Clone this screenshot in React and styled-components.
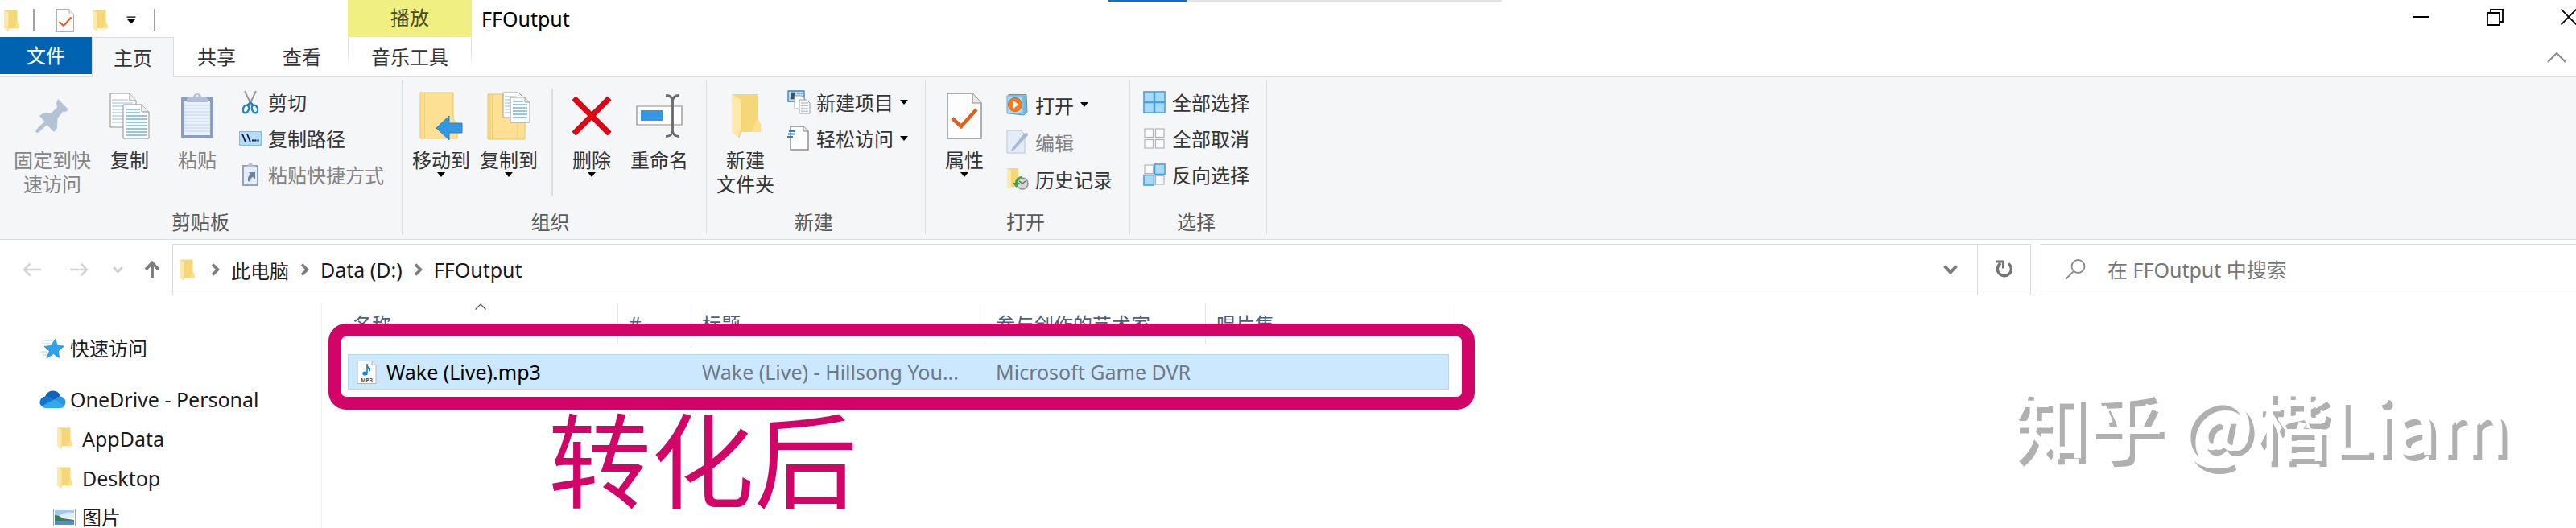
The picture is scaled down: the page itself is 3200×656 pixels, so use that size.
import React from 'react';
import styled, { createGlobalStyle, css } from 'styled-components';

const GlobalStyle = createGlobalStyle`
  * {
    box-sizing: border-box;
  }
  body {
    margin: 0;
    background: #fff;
    color: #1a1a1a;
    font-family: "Noto Sans", "Noto Sans CJK SC", sans-serif;
    font-size: 24px;
  }
  button {
    background: none;
    border: none;
    padding: 0;
    color: inherit;
    font: inherit;
  }
  a {
    color: inherit;
    text-decoration: none;
  }
  svg {
    display: block;
    flex: none;
  }
`;

const Window = styled.div`
  position: relative;
  display: flex;
  flex-direction: column;
  height: 100vh;
  overflow: hidden;
`;

/* ---------- title bar ---------- */

const TitleBar = styled.header`
  display: flex;
  height: 46px;
`;

const QuickAccess = styled.div`
  flex: 0 0 432px;
  display: flex;
  align-items: center;
  padding: 4px 0 0 4px;
`;

const QuickButton = styled.button`
  display: flex;
  justify-content: center;
  width: ${({ $width }) => $width}px;
`;

const QuickDivider = styled.span`
  width: 2px;
  height: 28px;
  margin-left: ${({ $left = 0 }) => $left}px;
  background: #a0a0a0;
`;

const ContextLabel = styled.div`
  flex: 0 0 154px;
  background: #f0ef82;
  color: #4a4a1c;
  line-height: 44px;
  text-align: center;
`;

const WindowTitle = styled.h1`
  flex: 1;
  margin: 0;
  padding-left: 12px;
  color: #000;
  font-size: 25px;
  font-weight: 400;
  line-height: 46px;
`;

const WindowButtons = styled.div`
  flex: none;
  display: flex;
  width: 239px;
`;

const WindowButton = styled.button`
  flex: 0 0 92px;
  display: flex;
  justify-content: center;
  align-items: center;
  height: 42px;
`;

const TopProgress = styled.div`
  position: absolute;
  top: 0;
  left: 1377px;
  width: 489px;
  height: 2px;
  background: linear-gradient(90deg, #0f6fc5 97px, #e3e3e3 97px);
`;

/* ---------- tabs ---------- */

const TabBar = styled.nav`
  display: flex;
  align-items: flex-start;
  height: 49px;
`;

const Tab = styled.button`
  width: 106px;
  height: 50px;
  color: #333;
  line-height: 48px;
  text-align: center;
  ${({ $kind }) => $kind === 'file' && css`
    width: 114px;
    height: 46px;
    background: #0063b1;
    color: #fff;
    line-height: 44px;
  `}
  ${({ $kind }) => $kind === 'active' && css`
    position: relative;
    width: 102px;
    background: #f4f6f8;
    border: 1px solid #dcdddf;
    border-bottom: none;
  `}
  ${({ $kind }) => $kind === 'context' && css`
    width: 154px;
    height: 49px;
    margin-left: 4px;
    border: 1px solid;
    border-width: 0 1px;
    border-image: linear-gradient(#dcdddf 30%, #fff 80%) 1;
  `}
`;

const CollapseButton = styled.button`
  margin: 18px 12px 0 auto;
`;

/* ---------- ribbon ---------- */

const Ribbon = styled.div`
  display: flex;
  padding: 4px 0 6px;
  background: #f4f6f8;
  border: solid #dadcde;
  border-width: 1px 0;
`;

const Group = styled.section`
  display: flex;
  flex-direction: column;
  height: 191px;
  padding: 0 ${({ $right = 11 }) => $right}px 0 ${({ $left = 6 }) => $left}px;
  border-right: 1px solid #dcdee0;
`;

const GroupBody = styled.div`
  flex: 1;
  display: flex;
  align-items: flex-start;
`;

const GroupName = styled.h2`
  margin: 0;
  color: #5a5a5a;
  font-size: 24px;
  font-weight: 400;
  line-height: 30px;
  text-align: center;
`;

const GroupDivider = styled.span`
  width: 2px;
  height: 134px;
  margin: 10px 6px 0 11px;
  background: #dcdee0;
`;

const BigButton = styled.button`
  display: flex;
  flex-direction: column;
  align-items: center;
  min-width: 84px;
  padding: 14px 6px 0;
  color: ${({ disabled }) => (disabled ? '#848484' : '#333')};
  line-height: 30px;
`;

const BigIcon = styled.span`
  display: flex;
  align-items: center;
  height: 60px;
  margin-bottom: 10px;
`;

const SmallList = styled.div`
  display: flex;
  flex-direction: column;
  padding-top: ${({ $top = 4 }) => $top}px;
`;

const SmallButton = styled.button`
  display: flex;
  align-items: center;
  gap: 8px;
  height: ${({ $height = 45 }) => $height}px;
  padding: 0 10px;
  color: ${({ disabled }) => (disabled ? '#848484' : '#333')};
`;

const SmallIcon = styled.span`
  display: flex;
  justify-content: center;
  width: 28px;
`;

/* ---------- address bar ---------- */

const AddressRow = styled.div`
  display: flex;
  padding-top: 5px;
`;

const NavButtons = styled.div`
  flex: 0 0 214px;
  display: flex;
  align-items: center;
  padding-left: 28px;
`;

const NavButton = styled.button`
  margin-right: ${({ $gap = 0 }) => $gap}px;
`;

const AddressBox = styled.div`
  flex: 1;
  display: flex;
  align-items: center;
  height: 64px;
  padding-left: 7px;
  border: 1px solid #d9dadb;
`;

const Crumbs = styled.ol`
  flex: 1;
  display: flex;
  align-items: center;
  margin: 0;
  padding: 0 0 0 6px;
  list-style: none;
  color: #1a1a1a;
`;

const Crumb = styled.li`
  display: flex;
  align-items: center;
  gap: 14px;
  padding-left: 14px;
  font-size: ${({ $size = 25 }) => $size}px;
`;

const BoxButton = styled.button`
  display: flex;
  justify-content: center;
  align-items: center;
  align-self: stretch;
  width: 66px;
  border-left: ${({ $line }) => ($line ? '1px solid #d9dadb' : 'none')};
`;

const SearchBox = styled.label`
  flex: 0 0 665px;
  display: flex;
  align-items: center;
  gap: 27px;
  margin-left: 12px;
  padding-left: 29px;
  border: 1px solid #d9dadb;
  border-right: none;
`;

const SearchInput = styled.input`
  flex: 1;
  padding: 0;
  border: none;
  outline: none;
  background: none;
  font: inherit;
  font-size: 25px;
  &::placeholder {
    color: #767676;
    opacity: 1;
  }
`;

/* ---------- body ---------- */

const Main = styled.main`
  flex: 1;
  display: flex;
  min-height: 0;
  padding-top: 9px;
`;

const Sidebar = styled.aside`
  flex: 0 0 400px;
  padding-top: 32px;
  border-right: 1px solid #efefef;
`;

const SideLink = styled.a`
  display: flex;
  align-items: center;
  height: 49px;
  margin-top: ${({ $root }) => ($root ? 14 : 0)}px;
  padding-left: ${({ $nested }) => ($nested ? 66 : 48)}px;
  color: #1a1a1a;
  font-size: ${({ $size = 25 }) => $size}px;
  line-height: 24px;
`;

const SideIcon = styled.span`
  display: flex;
  justify-content: center;
  width: ${({ $nested }) => ($nested ? 28 : 34)}px;
  margin-right: ${({ $nested }) => ($nested ? 8 : 5)}px;
`;

const Listing = styled.div`
  position: relative;
  flex: none;
  align-self: flex-start;
  margin-left: 32px;
`;

const FileTable = styled.table`
  width: 1376px;
  border-spacing: 0;
  table-layout: fixed;
  tbody::before {
    content: '';
    display: block;
    height: 13px;
  }
`;

const Column = styled.col`
  width: ${({ $width }) => $width}px;
`;

const HeadCell = styled.th`
  position: relative;
  height: 51px;
  padding: 0 0 0 ${({ $pad = 13 }) => $pad}px;
  border-right: 1px solid #e5e5e5;
  color: #4c607a;
  font-weight: 400;
  text-align: left;
  white-space: nowrap;
`;

const SortMark = styled.span`
  position: absolute;
  top: 1px;
  left: 158px;
`;

const Cell = styled.td`
  height: 44px;
  padding: 0 10px 0 13px;
  overflow: hidden;
  background: #cce8ff;
  border: solid #b2d8f3;
  border-width: 1px 0;
  color: #6d7a84;
  font-size: 25px;
  line-height: 34px;
  text-overflow: ellipsis;
  white-space: nowrap;
  &:first-child {
    padding-left: 10px;
    border-left-width: 1px;
  }
  &:last-child {
    border-right-width: 1px;
  }
`;

const FileName = styled.a`
  display: flex;
  align-items: center;
  gap: 12px;
  color: #000;
`;

const Frame = styled.div`
  position: absolute;
  inset: 26px -24px -25px;
  border: 16px solid #d10468;
  border-radius: 22px;
`;

const Note = styled.p`
  position: absolute;
  top: 127px;
  left: 249px;
  margin: 0;
  color: #d10468;
  font-family: "Noto Sans CJK SC", sans-serif;
  font-size: 128px;
  line-height: 128px;
  white-space: nowrap;
`;

const Watermark = styled.p`
  position: absolute;
  right: 84px;
  bottom: 82px;
  margin: 0;
  color: #fff;
  font-family: "Noto Sans CJK SC", sans-serif;
  font-size: 94px;
  font-weight: 500;
  line-height: 100px;
  text-shadow: 6px 7px 0 #b0b0b0;
  white-space: nowrap;
`;

/* ---------- icons ---------- */

const FolderIcon = ({ width = 20, height = 27 }) => (
  <svg width={width} height={height} viewBox="0 0 20 28" preserveAspectRatio="none">
    <path d="M1 0.500h16.500v15l2 4v4.500H6z" fill="#f6d778" />
    <path d="M17.500 15.500l2 4v4.500h-6z" fill="#fbe08d" />
    <path d="M1 0.500l6 3.500v19l-1.500 4.500L1 24z" fill="#fde9a9" />
    <path d="M7 4v19l-1.500 4.500" fill="none" stroke="#efcf77" strokeWidth="0.700" />
  </svg>
);

const CheckPageIcon = ({ width = 44, height = 58 }) => (
  <svg width={width} height={height} viewBox="0 0 44 58">
    <path d="M1 1h31l11 12v44H1z" fill="#fdfdfd" stroke="#8e8e8e" strokeWidth="1.400" />
    <path d="M32 1v12h11" fill="#e9e9e9" stroke="#8e8e8e" strokeWidth="1.200" />
    <path d="M7 32l11 10L37 21" fill="none" stroke="#e0601f" strokeWidth="4.500" />
  </svg>
);

const TriangleIcon = () => (
  <svg width="10" height="6" viewBox="0 0 10 6">
    <path d="M0 0h10L5 6z" fill="#000" />
  </svg>
);

const CustomizeIcon = () => (
  <svg width="12" height="10" viewBox="0 0 12 10">
    <path d="M0.500 0.500h11v1.200H.5zM1 4h10l-5 5.500z" fill="#000" />
  </svg>
);

const MinimizeIcon = () => (
  <svg width="20" height="20" viewBox="0 0 20 20">
    <path d="M0 10h20" stroke="#000" strokeWidth="2" />
  </svg>
);

const RestoreIcon = () => (
  <svg width="21" height="21" viewBox="0 0 21 21" fill="none" stroke="#000" strokeWidth="1.800">
    <path d="M1 5h15v15H1z" />
    <path d="M5 5V1h15v15h-4" />
  </svg>
);

const CloseIcon = () => (
  <svg width="20" height="20" viewBox="0 0 20 20">
    <path d="M0.500 0.500l19 19M19.500 0.500l-19 19" stroke="#000" strokeWidth="1.800" />
  </svg>
);

const CollapseIcon = () => (
  <svg width="24" height="14" viewBox="0 0 24 14">
    <path d="M1 13L12 2l11 11" fill="none" stroke="#8c8c8c" strokeWidth="2.200" />
  </svg>
);

const PinIcon = () => (
  <svg width="42" height="42" viewBox="0 0 42 42" fill="#b4c2d6">
    <path d="M28 0l13 13-3.500 3-3-0.500-7 8.500-0.500 12-4 5-8.500-9L3 42l-3-1 2-4 9.500-9-6.500-7 5-3.500 9 .5 8-7.500-1-5z" />
  </svg>
);

const pageLines = (x, y, w, n, color, step) =>
  Array.from({ length: n }, (_, i) => (
    <path key={i} d={`M${x} ${y + i * step}h${w}`} stroke={color} strokeWidth="1.200" />
  ));

const CopyIcon = () => (
  <svg width="50" height="58" viewBox="0 0 50 58">
    <path d="M1 1h24l8 9v33H1z" fill="#fff" stroke="#8e8e8e" />
    <path d="M25 1v9h8" fill="#eee" stroke="#8e8e8e" />
    {pageLines(3, 9, 20, 1, '#a9c9e6', 4)}
    {pageLines(3, 13, 26, 7, '#a9c9e6', 4)}
    <path d="M17 15h23l9 9v33H17z" fill="#fff" stroke="#8e8e8e" />
    <path d="M40 15v9h9" fill="#eee" stroke="#8e8e8e" />
    {pageLines(20, 21, 18, 2, '#4f9fdc', 4)}
    {pageLines(20, 29, 26, 7, '#4f9fdc', 4)}
  </svg>
);

const PasteIcon = () => (
  <svg width="42" height="58" viewBox="0 0 42 58">
    <rect x="1" y="5" width="40" height="52" rx="2" fill="#8d9cc0" />
    <path d="M5 10h32v43H5z" fill="#e9f1fb" />
    {pageLines(5, 16, 32, 9, '#cbd9ec', 4)}
    <path d="M8 12V8q1-3 8-3 1-4 5-4t5 4q7 0 8 3v4z" fill="#b3bfd6" />
    <circle cx="21" cy="4" r="1.500" fill="#e9f1fb" />
  </svg>
);

const CutIcon = () => (
  <svg width="20" height="30" viewBox="0 0 20 30" fill="none">
    <path d="M3 1l9 19M17 1L8 20" stroke="#9b9b9b" strokeWidth="2" />
    <ellipse cx="4.500" cy="23.500" rx="3.500" ry="5" stroke="#1e84cc" strokeWidth="2.400" transform="rotate(20 4.500 23.500)" />
    <ellipse cx="15.500" cy="23.500" rx="3.500" ry="5" stroke="#1e84cc" strokeWidth="2.400" transform="rotate(-20 15.500 23.500)" />
    <path d="M6 19l4-4 4 4" stroke="#1e84cc" strokeWidth="2" />
  </svg>
);

const PathIcon = () => (
  <svg width="28" height="18" viewBox="0 0 28 18">
    <rect x="0.500" y="0.500" width="27" height="17" fill="#b5dcfa" stroke="#7fb9e6" />
    <path d="M4 3.500l4 10M10 3.500l4 10" stroke="#0a1a2a" strokeWidth="1.800" />
    <path d="M16 11.500h2.200M19.200 11.500h2.200M22.400 11.500h2.200" stroke="#0a1a2a" strokeWidth="2" />
  </svg>
);

const ShortcutIcon = () => (
  <svg width="20" height="30" viewBox="0 0 20 30">
    <path d="M0 3h20v26H0z" fill="#93a2c4" />
    <path d="M2 6h16v21H2z" fill="#e6eefa" />
    <path d="M4 6V4h3q1-4 3-4t3 4h3v2z" fill="#b3bfd6" />
    <path d="M8 12h8v9l-3-3q-3 1-3 6l-3-1q-1-6 3-8z" fill="#6f82ab" />
  </svg>
);

const MoveToIcon = () => (
  <svg width="54" height="60" viewBox="0 0 54 60">
    <path d="M1 1h41v33l5 6v18H1z" fill="#fde092" stroke="#e9c562" />
    <path d="M4 1v57M6.500 1v57" stroke="#f0cb6b" strokeWidth="0.800" />
    <path d="M21 45l16-15v9h16v12H37v9z" fill="#3596e4" stroke="#2d7fc4" />
  </svg>
);

const CopyToIcon = () => (
  <svg width="54" height="60" viewBox="0 0 54 60">
    <path d="M1 3h41v35h5v21H1z" fill="#fde092" stroke="#e9c562" />
    <path d="M4 3v56M6.500 3v56M38 38v21" stroke="#eac563" strokeWidth="0.800" />
    <path d="M20 1h19l5 5v26H20z" fill="#fff" stroke="#9a9a9a" />
    {pageLines(22, 6, 14, 6, '#9fc4e2', 4)}
    <path d="M29 7h18l6 6v25H29z" fill="#fff" stroke="#9a9a9a" />
    <path d="M47 7v6h6" fill="#eee" stroke="#9a9a9a" />
    {pageLines(32, 12, 13, 1, '#4f9fdc', 4)}
    {pageLines(32, 16, 18, 5, '#4f9fdc', 4)}
  </svg>
);

const DeleteIcon = () => (
  <svg width="50" height="50" viewBox="0 0 50 50">
    <path d="M3 3l44 44M47 3L3 47" stroke="#c00312" strokeWidth="7" />
    <path d="M3 3l44 44M47 3L3 47" stroke="#e10714" strokeWidth="5" />
  </svg>
);

const RenameIcon = () => (
  <svg width="58" height="54" viewBox="0 0 58 54" fill="none">
    <path d="M1 15h56v23H1z" fill="#fff" stroke="#8b8b8b" strokeWidth="1.200" />
    <path d="M6 20h27v13H6z" fill="#3596e4" />
    <path d="M37 1.500q8 0 8.500 7v37q-.5 7-8.500 7M54 1.500q-8 0-8.500 7v37q.5 7 8.500 7" stroke="#6a6a6a" strokeWidth="2.800" />
  </svg>
);

const NewItemIcon = () => (
  <svg width="29" height="30" viewBox="0 0 29 30">
    <path d="M1 1h20v13H1z" fill="#b9dff8" stroke="#3b87b8" strokeWidth="1.400" />
    <path d="M5 3h4v8H4zM12 4h7" fill="#44545e" stroke="#44545e" strokeWidth="0.600" />
    <path d="M9 7h9l3 3v13H9z" fill="#fff" stroke="#a0a0a0" />
    <path d="M15 12h9l4 4v13H15z" fill="#fff" stroke="#999" />
    {pageLines(17, 16, 9, 4, '#9cc0e0', 3.4)}
    <path d="M19 14v14" stroke="#e9b3b3" strokeWidth="0.800" />
  </svg>
);

const EasyAccessIcon = () => (
  <svg width="30" height="31" viewBox="0 0 30 31">
    <path d="M5 1h16l6 6v23H5z" fill="#fdfdfd" stroke="#8a8a8a" strokeWidth="1.400" />
    <path d="M21 1v6h6" fill="#eee" stroke="#8a8a8a" />
    <path d="M3 7h8M2 10.500h8M1 14h7" stroke="#2f7fc2" strokeWidth="2" />
  </svg>
);

const PlayIcon = () => (
  <svg width="28" height="27" viewBox="0 0 28 27">
    <path d="M3 0.500h22l1 22-4 3.500-19-2z" fill="#8cc9ea" stroke="#4b9cc9" />
    <path d="M1 2h20v22H1z" fill="#a8daf3" stroke="#62aed6" />
    <circle cx="11" cy="13" r="8.500" fill="#ef7d23" stroke="#d5630f" />
    <path d="M8.500 8v10l7-5z" fill="#fff" />
    <path d="M23 2v22" stroke="#4b9cc9" strokeWidth="0.800" />
  </svg>
);

const EditIcon = () => (
  <svg width="28" height="30" viewBox="0 0 28 30">
    <path d="M1 1h17l5 5v23H1z" fill="#e4ecf8" stroke="#b7c4dc" />
    <path d="M7 24L22 5l4-1 1 3-17 18-4 2z" fill="#a9b8d4" />
  </svg>
);

const HistoryIcon = () => (
  <svg width="28" height="28" viewBox="0 0 28 28">
    <path d="M1 1h14v10l2 4v9H4z" fill="#f6d778" />
    <path d="M1 1l5 3v19l-1 4-4-2z" fill="#fde9a9" />
    <circle cx="20" cy="20" r="7" fill="#d5d9d8" stroke="#8c9492" strokeWidth="1.500" />
    <path d="M16 17l4 3 4-3" fill="none" stroke="#5b6462" strokeWidth="1.300" />
    <path d="M20 11q-8 0-9 8H8l4.500 6 4.500-6h-3q1-4 6-5z" fill="#3ba648" />
  </svg>
);

const GridIcon = ({ on }) => (
  <svg width="28" height="28" viewBox="0 0 28 28">
    {[[1, 1], [14.5, 1], [1, 14.5], [14.5, 14.5]].map(([x, y], i) => (
      <rect
        key={i}
        x={on[i] ? x : x + 1}
        y={on[i] ? y : y + 1}
        width={on[i] ? 12.5 : 10.5}
        height={on[i] ? 12.5 : 10.5}
        fill={on[i] ? '#a9dafa' : '#fbfbfb'}
        stroke={on[i] ? '#4a9fdb' : '#b4b4b4'}
        strokeWidth={on[i] ? 1.6 : 1.2}
      />
    ))}
  </svg>
);

const ArrowIcon = ({ back }) => (
  <svg width="23" height="18" viewBox="0 0 23 18" fill="none" stroke="#d4d4d4" strokeWidth="2.600">
    <path d={back ? 'M23 9H2M9.500 1.500L2 9l7.500 7.500' : 'M0 9h21M13.500 1.500L21 9l-7.500 7.500'} />
  </svg>
);

const UpIcon = () => (
  <svg width="18" height="22" viewBox="0 0 18 22" fill="none" stroke="#7c7c7c" strokeWidth="3.800">
    <path d="M9 22V3M1 11l8-8.500L17 11" />
  </svg>
);

const ChevronDown = ({ size = 18, color = '#7c7c7c', weight = 4 }) => (
  <svg width={size} height={size * 0.66} viewBox="0 0 18 12">
    <path d="M1.500 1.500L9 9.500l7.500-8" fill="none" stroke={color} strokeWidth={weight} />
  </svg>
);

const ChevronRight = () => (
  <svg width="11" height="16" viewBox="0 0 11 16">
    <path d="M2 1.500L8.500 8 2 14.500" fill="none" stroke="#7c7c7c" strokeWidth="3.600" />
  </svg>
);

const RefreshIcon = () => (
  <svg width="22" height="24" viewBox="0 0 22 24" fill="none" stroke="#757575">
    <path d="M16 4.500a8.500 8.500 0 1 1-9.500-.5" strokeWidth="3.400" />
    <path d="M1 2h8.500v8.500" strokeWidth="3" />
  </svg>
);

const SearchIcon = () => (
  <svg width="26" height="26" viewBox="0 0 26 26" fill="none" stroke="#8a8a8a" strokeWidth="1.800">
    <circle cx="16.500" cy="9" r="8" />
    <path d="M11 15L1 25" />
  </svg>
);

const StarIcon = () => (
  <svg width="30" height="26" viewBox="0 0 30 26">
    <path d="M5 3h11M2 7h11M1 17h7M3 21h5" stroke="#9fd0f0" strokeWidth="1" />
    <path d="M19 1l2 8.500 8.500.5-7 6 1 8.500-7-5L8 25l3.500-9L5 10.500l8.500-1z" fill="#2ea3ec" stroke="#1c8ad4" strokeWidth="0.800" />
  </svg>
);

const OneDriveIcon = () => (
  <svg width="33" height="22" viewBox="0 0 33 22">
    <path d="M7 8q3-8 10-7.500 7 0 9 7l-7 6z" fill="#0f63bd" />
    <path d="M7 7.500q3-1 6 1l10 6L9 21Q2 22 .5 16q-.5-7 6.500-8.500z" fill="#1277cf" />
    <path d="M19 12q3-5 7-4.500 6 1 6.500 7-.5 6.500-6 7z" fill="#2a96e0" />
    <path d="M3 19.500L19 11l12 8.500q-2 2.500-5 2.500H8q-3 0-5-2.500z" fill="#31a9ea" />
  </svg>
);

const PictureIcon = () => (
  <svg width="28" height="22" viewBox="0 0 28 22">
    <rect x="0.500" y="0.500" width="27" height="21" fill="#fff" stroke="#9aa7b5" />
    <path d="M2 2h24v10H2z" fill="#9fc9f2" />
    <path d="M8 8q8-5 18-3v6H8z" fill="#dcedfb" />
    <path d="M2 8q5 0 10 4l14 2v2H2z" fill="#3f7a5c" />
    <path d="M2 15h24v5H2z" fill="#4f8fc6" />
  </svg>
);

const Mp3Icon = () => (
  <svg width="25" height="29" viewBox="0 0 25 29">
    <path d="M1 0.500h18l5 5v23H1z" fill="#fff" stroke="#b5b5b5" />
    <path d="M19 0.500v5h5" fill="#eee" stroke="#a5a5a5" />
    <path d="M13 4v12" stroke="#1583c9" strokeWidth="1.600" />
    <path d="M13 4q1 4 4 5 1 3-1 5 0-4-3-5z" fill="#1583c9" />
    <ellipse cx="10.500" cy="16" rx="3.200" ry="2.600" fill="#1583c9" />
    <text x="12.500" y="27" fontSize="7" fontWeight="700" textAnchor="middle" fill="#5a4a4a">MP3</text>
  </svg>
);

const App = () => {
  return (
    <>
      <GlobalStyle />
      <Window>
        <TitleBar>
          <QuickAccess>
            <QuickButton $width={20} aria-label="FFOutput"><FolderIcon /></QuickButton>
            <QuickDivider $left={17} />
            <QuickButton $width={76} aria-label="属性"><CheckPageIcon width={22} height={29} /></QuickButton>
            <QuickButton $width={10} aria-label="新建文件夹"><FolderIcon /></QuickButton>
            <QuickButton $width={68} aria-label="自定义"><CustomizeIcon /></QuickButton>
            <QuickDivider $left={-6} />
          </QuickAccess>
          <ContextLabel>播放</ContextLabel>
          <WindowTitle>FFOutput</WindowTitle>
          <WindowButtons>
            <WindowButton aria-label="最小化"><MinimizeIcon /></WindowButton>
            <WindowButton aria-label="还原"><RestoreIcon /></WindowButton>
            <WindowButton aria-label="关闭"><CloseIcon /></WindowButton>
          </WindowButtons>
        </TitleBar>
        <TopProgress />

        <TabBar>
          <Tab $kind="file">文件</Tab>
          <Tab $kind="active">主页</Tab>
          <Tab>共享</Tab>
          <Tab>查看</Tab>
          <Tab $kind="context">音乐工具</Tab>
          <CollapseButton aria-label="最小化功能区"><CollapseIcon /></CollapseButton>
        </TabBar>

        <Ribbon>
          <Group $left={11} $right={12}>
            <GroupBody>
              <BigButton disabled>
                <BigIcon><PinIcon /></BigIcon>
                <span>固定到快<br />速访问</span>
              </BigButton>
              <BigButton>
                <BigIcon><CopyIcon /></BigIcon>
                <span>复制</span>
              </BigButton>
              <BigButton disabled>
                <BigIcon><PasteIcon /></BigIcon>
                <span>粘贴</span>
              </BigButton>
              <SmallList>
                <SmallButton><SmallIcon><CutIcon /></SmallIcon>剪切</SmallButton>
                <SmallButton><SmallIcon><PathIcon /></SmallIcon>复制路径</SmallButton>
                <SmallButton disabled><SmallIcon><ShortcutIcon /></SmallIcon>粘贴快捷方式</SmallButton>
              </SmallList>
            </GroupBody>
            <GroupName>剪贴板</GroupName>
          </Group>

          <Group $right={16}>
            <GroupBody>
              <BigButton>
                <BigIcon><MoveToIcon /></BigIcon>
                <span>移动到</span>
                <TriangleIcon />
              </BigButton>
              <BigButton>
                <BigIcon><CopyToIcon /></BigIcon>
                <span>复制到</span>
                <TriangleIcon />
              </BigButton>
              <GroupDivider />
              <BigButton>
                <BigIcon><DeleteIcon /></BigIcon>
                <span>删除</span>
                <TriangleIcon />
              </BigButton>
              <BigButton>
                <BigIcon><RenameIcon /></BigIcon>
                <span>重命名</span>
              </BigButton>
            </GroupBody>
            <GroupName>组织</GroupName>
          </Group>

          <Group>
            <GroupBody>
              <BigButton>
                <BigIcon><FolderIcon width={39} height={56} /></BigIcon>
                <span>新建<br />文件夹</span>
              </BigButton>
              <SmallList>
                <SmallButton><SmallIcon><NewItemIcon /></SmallIcon>新建项目<TriangleIcon /></SmallButton>
                <SmallButton><SmallIcon><EasyAccessIcon /></SmallIcon>轻松访问<TriangleIcon /></SmallButton>
              </SmallList>
            </GroupBody>
            <GroupName>新建</GroupName>
          </Group>

          <Group>
            <GroupBody>
              <BigButton>
                <BigIcon><CheckPageIcon /></BigIcon>
                <span>属性</span>
                <TriangleIcon />
              </BigButton>
              <SmallList $top={7}>
                <SmallButton $height={46}><SmallIcon><PlayIcon /></SmallIcon>打开<TriangleIcon /></SmallButton>
                <SmallButton $height={46} disabled><SmallIcon><EditIcon /></SmallIcon>编辑</SmallButton>
                <SmallButton $height={46}><SmallIcon><HistoryIcon /></SmallIcon>历史记录</SmallButton>
              </SmallList>
            </GroupBody>
            <GroupName>打开</GroupName>
          </Group>

          <Group>
            <GroupBody>
              <SmallList>
                <SmallButton><SmallIcon><GridIcon on={[1, 1, 1, 1]} /></SmallIcon>全部选择</SmallButton>
                <SmallButton><SmallIcon><GridIcon on={[0, 0, 0, 0]} /></SmallIcon>全部取消</SmallButton>
                <SmallButton><SmallIcon><GridIcon on={[0, 1, 1, 0]} /></SmallIcon>反向选择</SmallButton>
              </SmallList>
            </GroupBody>
            <GroupName>选择</GroupName>
          </Group>
        </Ribbon>

        <AddressRow>
          <NavButtons>
            <NavButton $gap={36} aria-label="后退"><ArrowIcon back /></NavButton>
            <NavButton $gap={30} aria-label="前进"><ArrowIcon /></NavButton>
            <NavButton $gap={27} aria-label="最近的位置"><ChevronDown size={13} color="#cfcfcf" /></NavButton>
            <NavButton aria-label="上移"><UpIcon /></NavButton>
          </NavButtons>
          <AddressBox>
            <FolderIcon />
            <Crumbs>
              <Crumb $size={24}><ChevronRight /><a href="#pc">此电脑</a></Crumb>
              <Crumb><ChevronRight /><a href="#data">Data (D:)</a></Crumb>
              <Crumb><ChevronRight /><a href="#ffoutput">FFOutput</a></Crumb>
            </Crumbs>
            <BoxButton aria-label="以前的位置"><ChevronDown /></BoxButton>
            <BoxButton $line aria-label="刷新"><RefreshIcon /></BoxButton>
          </AddressBox>
          <SearchBox>
            <SearchIcon />
            <SearchInput type="text" placeholder="在 FFOutput 中搜索" aria-label="搜索" />
          </SearchBox>
        </AddressRow>

        <Main>
          <Sidebar>
            <SideLink href="#quick" $size={24}><SideIcon><StarIcon /></SideIcon>快速访问</SideLink>
            <SideLink href="#onedrive" $root><SideIcon><OneDriveIcon /></SideIcon>OneDrive - Personal</SideLink>
            <SideLink href="#appdata" $nested><SideIcon $nested><FolderIcon /></SideIcon>AppData</SideLink>
            <SideLink href="#desktop" $nested><SideIcon $nested><FolderIcon /></SideIcon>Desktop</SideLink>
            <SideLink href="#pictures" $nested $size={24}><SideIcon $nested><PictureIcon /></SideIcon>图片</SideLink>
          </Sidebar>
          <Listing>
            <FileTable>
              <colgroup>
                <Column $width={336} />
                <Column $width={91} />
                <Column $width={365} />
                <Column $width={274} />
                <Column $width={302} />
                <Column $width={8} />
              </colgroup>
              <thead>
                <tr>
                  <HeadCell $pad={6}>
                    名称
                    <SortMark>
                      <svg width="14" height="8" viewBox="0 0 14 8">
                        <path d="M0.500 7.500L7 1l6.500 6.500" fill="none" stroke="#555" strokeWidth="1.200" />
                      </svg>
                    </SortMark>
                  </HeadCell>
                  <HeadCell>#</HeadCell>
                  <HeadCell>标题</HeadCell>
                  <HeadCell>参与创作的艺术家</HeadCell>
                  <HeadCell colSpan={2}>唱片集</HeadCell>
                </tr>
              </thead>
              <tbody>
                <tr>
                  <Cell><FileName href="#wake"><Mp3Icon />Wake (Live).mp3</FileName></Cell>
                  <Cell />
                  <Cell>Wake (Live) - Hillsong You...</Cell>
                  <Cell>Microsoft Game DVR</Cell>
                  <Cell />
                </tr>
              </tbody>
            </FileTable>
            <Frame />
            <Note>转化后</Note>
          </Listing>
        </Main>
        <Watermark>知乎 @楷Liam</Watermark>
      </Window>
    </>
  );
};

export default App;
